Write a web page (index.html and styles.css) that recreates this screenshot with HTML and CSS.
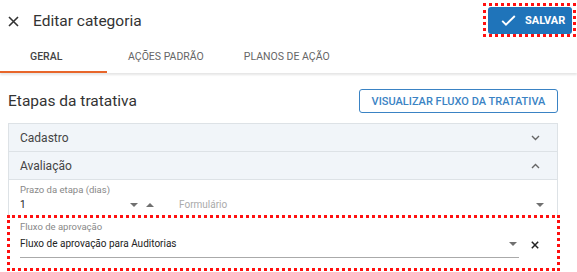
FILE: index.html
```html
<!DOCTYPE html>
<html lang="pt-BR">
<head>
  <meta charset="UTF-8">
  <meta name="viewport" content="width=device-width, initial-scale=1.0">
  <title>Editar categoria</title>
  <link rel="stylesheet" href="styles.css">
</head>
<body>
  <header class="topbar">
    <button class="icon-btn close">
      <svg width="11" height="11" viewBox="0 0 11 11"><path d="M1 1L10 10M10 1L1 10" stroke="#333" stroke-width="1.6"/></svg>
    </button>
    <h1>Editar categoria</h1>
    <div class="mark save-mark">
      <button class="save">
        <svg width="15" height="11" viewBox="0 0 15 11"><path d="M1.2 5.8L5 9.6L13.8 1" stroke="#fff" stroke-width="1.9" fill="none"/></svg>
        SALVAR
      </button>
    </div>
  </header>

  <nav class="tabs">
    <div class="tab active">Geral</div>
    <div class="tab">Ações padrão</div>
    <div class="tab">Planos de ação</div>
  </nav>

  <main class="content">
    <div class="section-head">
      <h2>Etapas da tratativa</h2>
      <button class="outline">Visualizar fluxo da tratativa</button>
    </div>

    <div class="panel">
      <div class="row">
        <span>Cadastro</span>
        <svg width="9" height="6" viewBox="0 0 9 6"><path d="M1 1L4.5 4.5L8 1" stroke="#666" stroke-width="1.4" fill="none"/></svg>
      </div>
      <div class="row">
        <span>Avaliação</span>
        <svg width="9" height="6" viewBox="0 0 9 6"><path d="M1 5L4.5 1.5L8 5" stroke="#666" stroke-width="1.4" fill="none"/></svg>
      </div>
      <div class="body">
        <div class="field prazo">
          <label>Prazo da etapa (dias)</label>
          <div class="value">
            <span>1</span>
            <span class="spin"><i class="tri down"></i><i class="tri up"></i></span>
          </div>
        </div>
        <div class="field form">
          <label>&nbsp;</label>
          <div class="value muted">
            <span>Formulário</span>
            <i class="tri down"></i>
          </div>
        </div>
      </div>
    </div>

    <div class="mark fluxo">
      <div class="field select">
        <label>Fluxo de aprovação</label>
        <div class="value">
          <span>Fluxo de aprovação para Auditorias</span>
          <i class="tri down"></i>
        </div>
      </div>
      <svg class="clear" width="8" height="8" viewBox="0 0 8 8"><path d="M0.8 0.8L7.2 7.2M7.2 0.8L0.8 7.2" stroke="#222" stroke-width="1.5"/></svg>
    </div>
  </main>
</body>
</html>
```

FILE: styles.css
```css
* { box-sizing: border-box; }
body { margin: 0; font-family: Roboto, "Liberation Sans", sans-serif; color: #333; background: #fff; overflow: hidden; }
button { font-family: inherit; cursor: pointer; }

.topbar { height: 42px; display: flex; align-items: center; padding: 0 1px 0 8px; }
.icon-btn { border: 0; background: none; padding: 0; width: 11px; height: 11px; display: flex; margin-top: 1px; }
.topbar h1 { font-size: 15.5px; font-weight: 400; margin: 0 0 0 14px; color: #333; flex: 1; }
.mark { border: 3px dotted #ff1010; }
.save-mark { align-self: flex-start; margin-top: 3px; padding: 1px 1px 0 2px; }
.save { height: 27px; width: 84px; border: 0; border-radius: 3px; background: #1f74ba; color: #fff; font-size: 11px; font-weight: 700; display: flex; align-items: center; gap: 9px; padding: 0 0 0 13px; }

.tabs { display: flex; height: 31px; box-shadow: 0 2px 2px rgba(0,0,0,0.1); }
.tab { font-size: 10.5px; font-weight: 400; text-transform: uppercase; color: #666; display: flex; align-items: center; padding: 0 20px 3px; }
.tab.active { color: #444; font-weight: 500; border-bottom: 2px solid #e8662a; padding: 0 44px 1px 30px; width: 107px; }
.tab:nth-child(2) { padding-left: 21px; }

.content { padding: 16px 19px 0 8px; }
.section-head { display: flex; justify-content: space-between; align-items: center; height: 24px; margin-bottom: 10px; }
.section-head h2 { font-size: 15.5px; font-weight: 400; margin: 0; color: #333; }
.outline { height: 24px; width: 199px; border: 1px solid #3a83c4; border-radius: 3px; background: #fff; color: #3a83c4; font-size: 11px; font-weight: 500; text-transform: uppercase; padding: 0; }

.panel { border: 1px solid #dde2e6; border-bottom: 0; }
.row { height: 28px; background: #f1f5f9; border-bottom: 1px solid #dde2e6; display: flex; align-items: center; justify-content: space-between; padding: 0 17px 0 11px; font-size: 12px; color: #444; }
.body { display: flex; gap: 25px; padding: 4px 13px 3px 11px; }
.field label { display: block; font-size: 9.5px; line-height: 12px; color: #888; }
.value { display: flex; align-items: center; justify-content: space-between; font-size: 10px; line-height: 14px; color: #222; margin-top: 2px; }
.prazo { width: 134px; }
.form { flex: 1; }
.muted { color: #aaa; }
.spin { display: flex; gap: 8px; }
.tri { display: inline-block; width: 0; height: 0; border-left: 4px solid transparent; border-right: 4px solid transparent; }
.tri.down { border-top: 4px solid #707070; }
.tri.up { border-bottom: 4px solid #707070; }

.fluxo { display: flex; align-items: flex-start; gap: 12px; height: 56px; margin: 0 -2px 0 -1px; padding: 3px 18px 0 10px; }
.select { flex: 1; border-bottom: 1px solid #aaa; padding-bottom: 5px; }
.select .value { height: 16px; margin-top: 3px; padding-right: 2px; }
.clear { margin-top: 20px; }
```
